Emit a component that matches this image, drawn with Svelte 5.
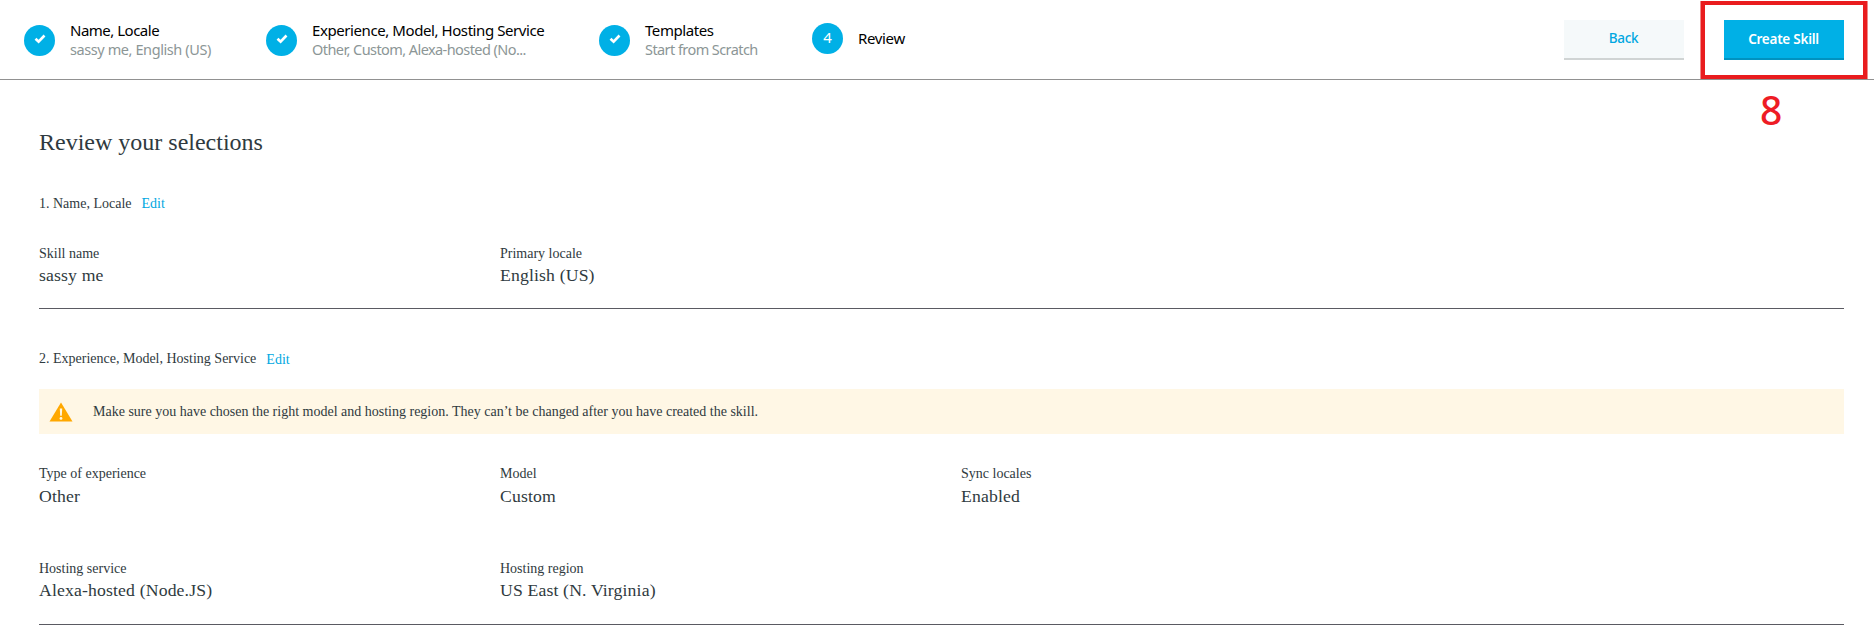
<script>
  const steps = [
    { title: 'Name, Locale', detail: 'sassy me, English (US)', key: 'name' },
    { title: 'Experience, Model, Hosting Service', detail: 'Other, Custom, Alexa-hosted (No...', key: 'experience' },
    { title: 'Templates', detail: 'Start from Scratch', key: 'templates' },
  ];
  const sections = [
    {
      key: 'first',
      title: '1. Name, Locale',
      rows: [[['Skill name', 'sassy me'], ['Primary locale', 'English (US)']]],
    },
    {
      key: 'second',
      title: '2. Experience, Model, Hosting Service',
      notice: 'Make sure you have chosen the right model and hosting region. They can’t be changed after you have created the skill.',
      rows: [
        [['Type of experience', 'Other'], ['Model', 'Custom'], ['Sync locales', 'Enabled']],
        [['Hosting service', 'Alexa-hosted (Node.JS)'], ['Hosting region', 'US East (N. Virginia)']],
      ],
    },
  ];
</script>

<header>
  <nav>
    {#each steps as step}
      <div class="step {step.key}">
        <span class="dot">
          <svg width="12" height="10" viewBox="0 0 12 10"><path d="M1.5 4.7 4.6 7.7 10.5 1.5" /></svg>
        </span>
        <div class="words">
          <div class="title">{step.title}</div>
          <div class="detail">{step.detail}</div>
        </div>
      </div>
    {/each}
    <div class="step review">
      <span class="dot">4</span>
      <div class="title">Review</div>
    </div>
  </nav>
  <div class="actions">
    <button class="back">Back</button>
    <button class="create">Create Skill</button>
  </div>
  <div class="marker"></div>
  <div class="number">8</div>
</header>

<main>
  <h1>Review your selections</h1>
  {#each sections as section}
    <section class={section.key}>
      <h2><span>{section.title}</span><a href="#edit">Edit</a></h2>
      {#if section.notice}
        <div class="notice">
          <svg width="24" height="20" viewBox="0 0 24 20">
            <path d="M12 0.5 23.5 19.5H0.5Z" fill="#ffa800" />
            <path d="M10.8 6.5h2.4l-.4 7.2h-1.6z" fill="#fff7e5" />
            <circle cx="12" cy="16.4" r="1.4" fill="#fff7e5" />
          </svg>
          <span>{section.notice}</span>
        </div>
      {/if}
      {#each section.rows as row}
        <dl>
          {#each row as [label, value]}
            <div><dt>{label}</dt><dd>{value}</dd></div>
          {/each}
        </dl>
      {/each}
    </section>
  {/each}
</main>

<style>
  :global(body) { background: #fff; overflow: hidden; }
  header {
    position: relative; box-sizing: border-box; height: 80px;
    display: flex; justify-content: space-between; padding: 20px 30px 0 24px;
    border-bottom: 1px solid #919191;
    font: 15px/20px "Noto Sans", sans-serif;
  }
  nav { display: flex; }
  .step { display: flex; gap: 15px; padding-top: 1px; box-sizing: border-box; }
  .step.name { width: 242px; }
  .step.experience { width: 333px; }
  .step.templates { width: 213px; }
  .words { margin-top: -1px; }
  .dot {
    width: 31px; height: 31px; margin-top: 4px; border-radius: 50%; flex: none;
    display: flex; align-items: center; justify-content: center;
    background: #00b0e6; color: #fff;
  }
  .dot svg { fill: none; stroke: #fff; stroke-width: 2.6; margin-top: -3px; }
  .title { color: #000; white-space: nowrap; letter-spacing: -0.42px; }
  .detail { color: #8c9696; white-space: nowrap; font-size: 14.5px; line-height: 19px; letter-spacing: -0.57px; }
  .name .title { letter-spacing: -0.5px; }
  .name .detail { letter-spacing: -0.41px; }
  .review .title { letter-spacing: -0.35px; line-height: 35px; }
  .review .dot { margin-top: 2px; line-height: 29px; align-items: flex-start; }
  .actions { display: flex; gap: 40px; }
  button {
    width: 120px; height: 40px; padding: 0 1px 2px 0; border: 0; border-bottom: 2px solid #d0d4d4;
    background: #f5f9fa; color: #00a7e1; font: 500 13.5px "Noto Sans", sans-serif; letter-spacing: -0.25px;
  }
  .create { background: #00b0e6; border-color: #0092c0; color: #fff; font-weight: 600; padding-bottom: 1px; }
  .marker {
    position: absolute; left: 1701px; top: 1px; box-sizing: border-box;
    width: 166px; height: 78px; border: 4px solid #e91c1e;
    box-shadow: -1px 0 #f08a8a, 1px 0 #f08a8a;
  }
  .number { position: absolute; left: 1760px; top: 83px; font-size: 39px; line-height: 53px; font-weight: 500; color: #ee1c25; }
  main { padding: 48px 30px 0 39px; font: 14px/20px "Liberation Serif", serif; color: #2f3a40; }
  h1 { margin: 0; font-size: 24px; font-weight: 400; line-height: 28px; }
  h2 { margin: 0; font-size: 14px; font-weight: 400; display: flex; gap: 10px; height: 20px; }
  a { color: #00a7e1; text-decoration: none; }
  section { border-bottom: 1px solid #5a5a62; box-sizing: border-box; }
  .first { margin-top: 38px; height: 115px; }
  .second { margin-top: 40px; height: 276px; }
  .second a { padding-top: 1px; }
  dl { display: flex; margin: 30px 0 0; }
  dl + dl { margin-top: 52px; }
  dl div { width: 461px; }
  dd { margin: 0; font-size: 17.7px; line-height: 22px; letter-spacing: 0.15px; padding-bottom: 1px; }
  .notice + dl dd { padding: 1px 0 0; }
  .notice { display: flex; align-items: center; gap: 20px; height: 45px; margin-top: 20px; padding-left: 10px; background: #fff7e5; }
</style>
